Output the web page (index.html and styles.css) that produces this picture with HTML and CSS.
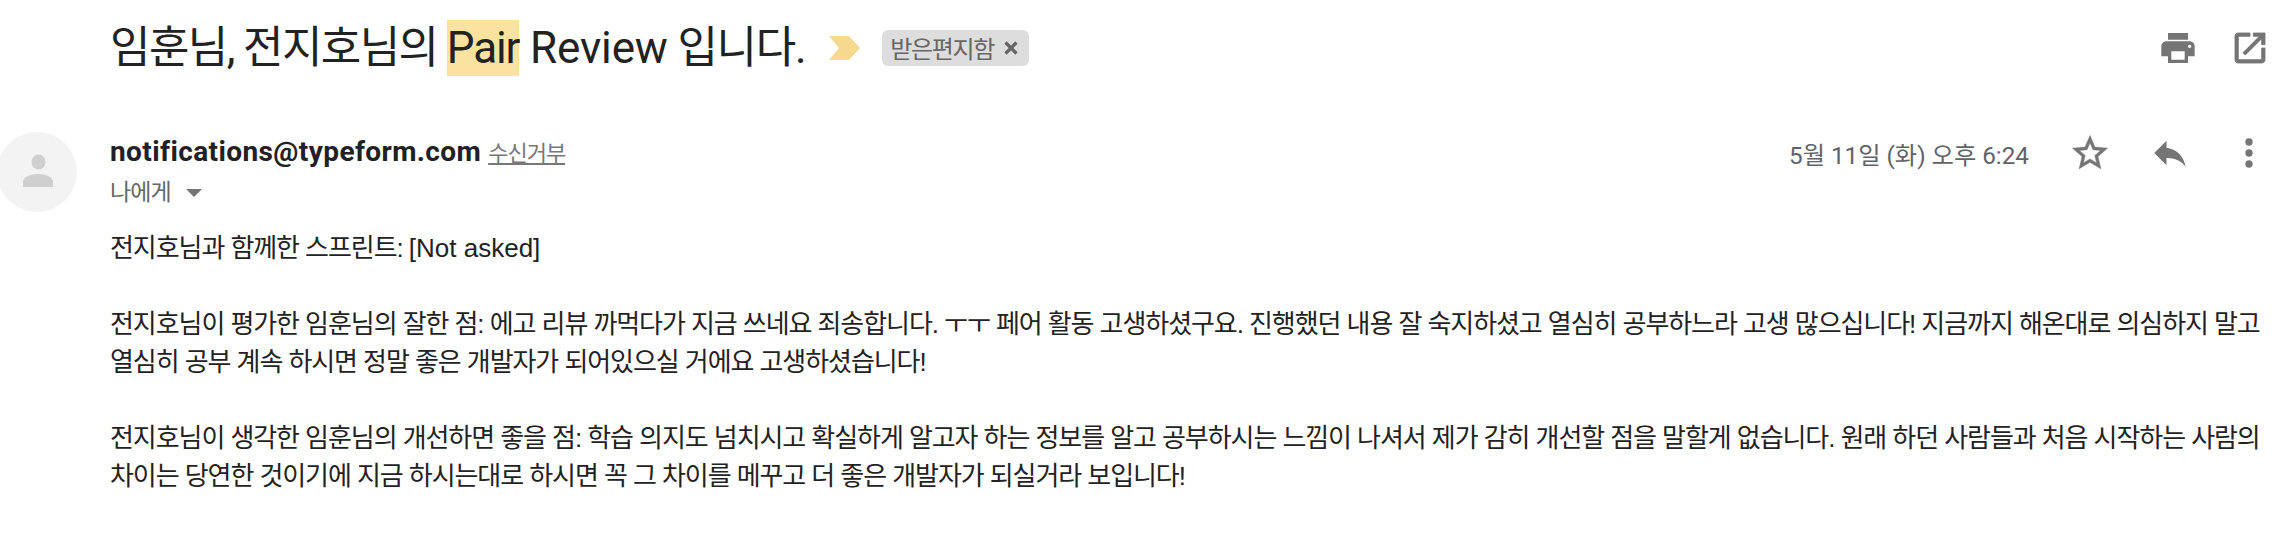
FILE: index.html
```html
<!DOCTYPE html>
<html lang="ko">
<head>
<meta charset="utf-8">
<title>Pair Review</title>
<link rel="stylesheet" href="styles.css">
</head>
<body>
<main class="mail">
  <header class="subject-row">
    <h1 class="subject">임훈님, 전지호님의 <span class="hl">Pair</span><span class="rev"> Review</span><span class="tail"> 입니다.</span></h1>
    <svg class="chevron" viewBox="0 0 32 24"><path d="M0 0h20l11 12-11 12H0l10-12z"/></svg>
    <span class="chip">받은편지함<svg class="chip-x" viewBox="0 0 14 14"><path d="M1.5 1.5l11 11M12.5 1.5l-11 11"/></svg></span>
    <span class="subject-actions">
      <svg class="icon print" viewBox="0 0 24 24"><path d="M19 8H5c-1.66 0-3 1.34-3 3v6h4v4h12v-4h4v-6c0-1.66-1.34-3-3-3zm-3 11H8v-5h8v5zm3-7c-.55 0-1-.45-1-1s.45-1 1-1 1 .45 1 1-.45 1-1 1zm-1-9H6v4h12V3z"/></svg>
      <svg class="icon open" viewBox="0 0 24 24"><path d="M19 19H5V5h7V3H5c-1.11 0-2 .9-2 2v14c0 1.1.89 2 2 2h14c1.1 0 2-.9 2-2v-7h-2v7zM14 3v2h3.59l-9.83 9.83 1.41 1.41L19 6.41V10h2V3h-7z"/></svg>
    </span>
  </header>
  <section class="sender-row">
    <div class="avatar">
      <svg viewBox="0 0 80 80"><ellipse cx="41.5" cy="30" rx="7" ry="7.5"/><path d="M26 55v-5c0-5 7-8 15-8s15 3 15 8v5z"/></svg>
    </div>
    <div class="sender">
      <div class="from"><b>notifications@typeform.com</b> <a class="unsub">수신거부</a></div>
      <div class="to">나에게<span class="caret"></span></div>
    </div>
    <div class="meta">
      <span class="date">5월 11일 (화) 오후 6:24</span>
      <svg class="icon star" viewBox="0 0 24 24"><path d="M22 9.24l-7.19-.62L12 2 9.19 8.63 2 9.24l5.46 4.73L5.82 21 12 17.27 18.18 21l-1.63-7.03L22 9.24zM12 15.4l-3.76 2.27 1-4.28-3.32-2.88 4.38-.38L12 6.1l1.71 4.04 4.38.38-3.32 2.88 1 4.28L12 15.4z"/></svg>
      <svg class="icon reply" viewBox="0 0 24 24"><path d="M10 9V5l-7 7 7 7v-4.1c5 0 8.5 1.6 11 5.1-1-5-4-10-11-11z"/></svg>
      <svg class="icon more" viewBox="0 0 24 24"><circle cx="12" cy="6" r="2"/><circle cx="12" cy="12" r="2"/><circle cx="12" cy="18" r="2"/></svg>
    </div>
  </section>
  <article class="body">
    <p>전지호님과 함께한 스프린트: <span class="latin">[Not asked]</span></p>
    <p>전지호님이 평가한 임훈님의 잘한 점: 에고 리뷰 까먹다가 지금 쓰네요 죄송합니다. ㅜㅜ 페어 활동 고생하셨구요. 진행했던 내용 잘 숙지하셨고 열심히 공부하느라 고생 많으십니다! 지금까지 해온대로 의심하지 말고 열심히 공부 계속 하시면 정말 좋은 개발자가 되어있으실 거에요 고생하셨습니다!</p>
    <p>전지호님이 생각한 임훈님의 개선하면 좋을 점: 학습 의지도 넘치시고 확실하게 알고자 하는 정보를 알고 공부하시는 느낌이 나셔서 제가 감히 개선할 점을 말할게 없습니다. 원래 하던 사람들과 처음 시작하는 사람의 차이는 당연한 것이기에 지금 하시는대로 하시면 꼭 그 차이를 메꾸고 더 좋은 개발자가 되실거라 보입니다!</p>
  </article>
</main>
</body>
</html>
```
FILE: styles.css
```css
html, body { margin: 0; padding: 0; background: #fff; }
body { width: 2282px; height: 548px; overflow: hidden; font-family: Roboto, "Noto Sans CJK KR", sans-serif; color: #222; }
.icon { fill: #757575; display: block; flex: none; }

.subject-row { display: flex; align-items: center; height: 95px; padding-left: 110px; }
.subject { margin: 0; font-size: 44px; font-weight: 400; line-height: 56px; letter-spacing: -1.6px; white-space: nowrap; color: #222; }
.hl { display: inline-block; background: #fce29f; letter-spacing: -1.12px; }
.rev { letter-spacing: -.15px; white-space: pre; }
.tail { letter-spacing: -1.3px; white-space: pre; }
.chevron { width: 32px; height: 24px; margin-left: 24px; fill: #f6d98f; flex: none; }
.chip { display: flex; align-items: center; height: 36px; margin-left: 21px; padding: 0 11px 0 8px; border-radius: 6px; background: #dddddd; color: #666; font-size: 24px; letter-spacing: -1.3px; }
.chip-x { width: 14px; height: 14px; margin-left: 10px; fill: none; stroke: #666; stroke-width: 3.2; }
.subject-actions { display: flex; align-items: center; gap: 32px; margin-left: auto; margin-right: 12px; }
.print, .open { width: 40px; height: 40px; }
.open { stroke: #757575; stroke-width: .5; }

.sender-row { display: flex; align-items: flex-start; margin-top: 37px; margin-left: -3px; }
.avatar { width: 80px; height: 80px; border-radius: 50%; background: #f3f3f3; flex: none; }
.avatar svg { display: block; fill: #cfcfcf; }
.sender { margin-left: 33px; }
.from { font-size: 28px; line-height: 36px; margin-top: 2px; white-space: nowrap; color: #202124; }
.from b { font-weight: 700; letter-spacing: .4px; }
.unsub { font-size: 22px; color: #777; text-decoration: underline; letter-spacing: -1px; }
.to { display: flex; align-items: center; font-size: 23px; line-height: 30px; margin-top: 6px; color: #666; letter-spacing: -.9px; }
.caret { width: 0; height: 0; margin-left: 15px; border-left: 8px solid transparent; border-right: 8px solid transparent; border-top: 8px solid #757575; }
.meta { display: flex; align-items: center; margin-left: auto; margin-top: -1px; height: 44px; }
.date { font-size: 24.25px; color: #5f6368; margin-right: 40px; white-space: nowrap; }
.star, .reply { width: 42px; height: 42px; }
.star { stroke: #757575; stroke-width: .3; }
.reply { margin-left: 38px; }
.more { width: 44px; height: 44px; margin-left: 36px; margin-right: 11px; }

.body { margin: 17px 8px 0 110px; font-family: "Liberation Sans", "Noto Sans CJK KR", sans-serif; font-size: 26px; line-height: 38px; letter-spacing: -1.07px; word-break: keep-all; color: #222; }
.body p { margin: 0 0 38px; }
.latin { letter-spacing: 0; }
```
